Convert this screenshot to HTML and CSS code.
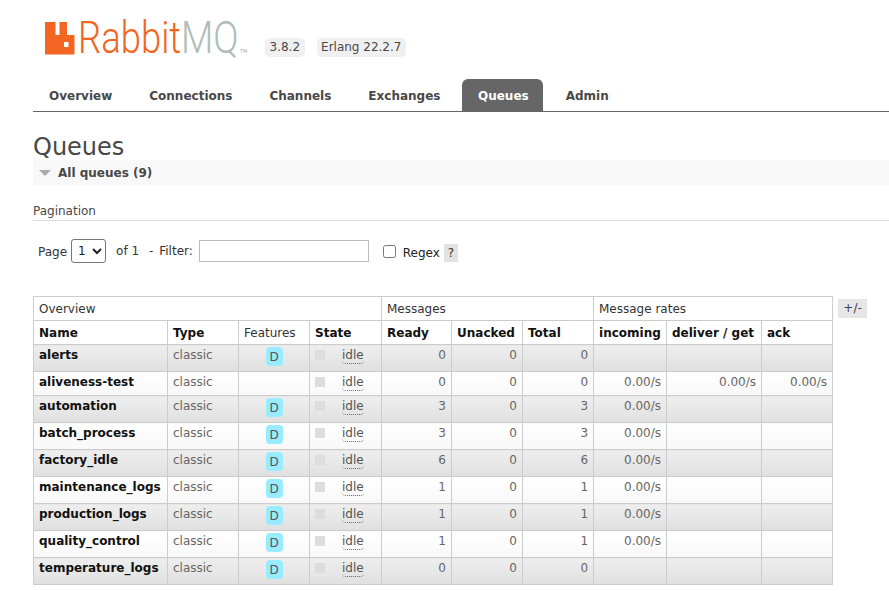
FILE: index.html
```html
<!DOCTYPE html>
<html lang="en">
<head>
<meta charset="utf-8">
<title>RabbitMQ Management</title>
<link rel="stylesheet" href="styles.css">
</head>
<body>
<header class="header">
  <div class="logo">
    <svg class="logo-mark" width="30" height="33" viewBox="0 0 30 33" aria-hidden="true"><path fill="#f26522" fill-rule="evenodd" d="M0 0H10.5V13H14.5V0H22V13H29.5V32.5H0ZM19 20V25H23.5V20Z"/></svg>
    <span class="logo-rabbit">Rabbit</span><span class="logo-mq">MQ</span>
    <span class="logo-tm">TM</span>
  </div>
  <div class="versions"><span class="badge">3.8.2</span><span class="badge">Erlang 22.2.7</span></div>
</header>
<nav class="tabs">
  <a class="tab">Overview</a><a class="tab">Connections</a><a class="tab">Channels</a><a class="tab">Exchanges</a><a class="tab active">Queues</a><a class="tab">Admin</a>
</nav>
<main class="main">
  <h1 class="title">Queues</h1>
  <div class="section-head"><span class="triangle"></span>All queues (9)</div>
  <h3 class="pagination">Pagination</h3>
  <div class="filter">
    <span class="lbl-page">Page</span>
    <select class="page-select"><option>1</option></select>
    <span class="lbl-of">of 1</span>
    <span class="lbl-filter">- Filter:</span>
    <input class="filter-input" type="text">
    <input class="regex-check" type="checkbox">
    <span class="lbl-regex">Regex</span>
    <span class="help">?</span>
  </div>
  <div class="table-wrap">
    <table class="queues">
      <colgroup>
        <col class="c1"><col class="c2"><col class="c3"><col class="c4"><col class="c5"><col class="c6"><col class="c7"><col class="c8"><col class="c9"><col class="c10">
      </colgroup>
      <thead>
        <tr class="group"><th colspan="4">Overview</th><th colspan="3">Messages</th><th colspan="3">Message rates</th></tr>
        <tr class="cols"><th>Name</th><th>Type</th><th class="plain">Features</th><th>State</th><th>Ready</th><th>Unacked</th><th>Total</th><th>incoming</th><th>deliver / get</th><th>ack</th></tr>
      </thead>
      <tbody>
        <tr class="odd"><td class="name">alerts</td><td class="type">classic</td><td class="feat"><span class="d">D</span></td><td class="state"><span class="sq"></span><span class="idle">idle</span></td><td class="num">0</td><td class="num">0</td><td class="num">0</td><td></td><td></td><td></td></tr>
        <tr class="even"><td class="name">aliveness-test</td><td class="type">classic</td><td class="feat"></td><td class="state"><span class="sq"></span><span class="idle">idle</span></td><td class="num">0</td><td class="num">0</td><td class="num">0</td><td class="num">0.00/s</td><td class="num">0.00/s</td><td class="num">0.00/s</td></tr>
        <tr class="odd"><td class="name">automation</td><td class="type">classic</td><td class="feat"><span class="d">D</span></td><td class="state"><span class="sq"></span><span class="idle">idle</span></td><td class="num">3</td><td class="num">0</td><td class="num">3</td><td class="num">0.00/s</td><td></td><td></td></tr>
        <tr class="even"><td class="name">batch_process</td><td class="type">classic</td><td class="feat"><span class="d">D</span></td><td class="state"><span class="sq"></span><span class="idle">idle</span></td><td class="num">3</td><td class="num">0</td><td class="num">3</td><td class="num">0.00/s</td><td></td><td></td></tr>
        <tr class="odd"><td class="name">factory_idle</td><td class="type">classic</td><td class="feat"><span class="d">D</span></td><td class="state"><span class="sq"></span><span class="idle">idle</span></td><td class="num">6</td><td class="num">0</td><td class="num">6</td><td class="num">0.00/s</td><td></td><td></td></tr>
        <tr class="even"><td class="name">maintenance_logs</td><td class="type">classic</td><td class="feat"><span class="d">D</span></td><td class="state"><span class="sq"></span><span class="idle">idle</span></td><td class="num">1</td><td class="num">0</td><td class="num">1</td><td class="num">0.00/s</td><td></td><td></td></tr>
        <tr class="odd"><td class="name">production_logs</td><td class="type">classic</td><td class="feat"><span class="d">D</span></td><td class="state"><span class="sq"></span><span class="idle">idle</span></td><td class="num">1</td><td class="num">0</td><td class="num">1</td><td class="num">0.00/s</td><td></td><td></td></tr>
        <tr class="even"><td class="name">quality_control</td><td class="type">classic</td><td class="feat"><span class="d">D</span></td><td class="state"><span class="sq"></span><span class="idle">idle</span></td><td class="num">1</td><td class="num">0</td><td class="num">1</td><td class="num">0.00/s</td><td></td><td></td></tr>
        <tr class="odd"><td class="name">temperature_logs</td><td class="type">classic</td><td class="feat"><span class="d">D</span></td><td class="state"><span class="sq"></span><span class="idle">idle</span></td><td class="num">0</td><td class="num">0</td><td class="num">0</td><td></td><td></td><td></td></tr>
      </tbody>
    </table>
    <span class="plus-minus">+/-</span>
  </div>
</main>
</body>
</html>
```
FILE: styles.css
```css
* { box-sizing: border-box; }
html, body { margin: 0; padding: 0; }
body {
  font-family: "DejaVu Sans", Verdana, sans-serif;
  font-size: 12px;
  color: #484848;
  background: #fff;
  overflow: hidden;
  height: 591px;
}
.header { display: flex; align-items: flex-start; height: 79px; padding: 22px 0 0 45px; }
.logo { display: flex; align-items: flex-start; width: 220px; }
.logo-mark { display: block; flex: none; }
.logo-rabbit, .logo-mq { display: block; flex: none; font-family: Roboto, sans-serif; font-weight: 300; font-size: 45px; line-height: 32px; white-space: nowrap; transform-origin: left center; }
.logo-rabbit { color: #f26522; width: 103px; margin-left: 3px; transform: scaleX(0.81); }
.logo-mq { color: #b0bdb6; width: 57px; transform: scaleX(0.83); }
.logo-tm { font-size: 5px; line-height: 6px; color: #aaa; margin-top: 26px; margin-left: 2px; }
.versions { display: flex; gap: 12px; padding-top: 16px; }
.badge { background: #f0f0f0; border-radius: 5px; padding: 0 4.5px; height: 19px; line-height: 19px; font-size: 12px; color: #484848; }
.tabs { display: flex; margin-left: 33px; height: 33px; border-bottom: 1px solid #666; }
.tab { font-weight: bold; font-size: 12px; padding: 0 16px; line-height: 35px; margin-right: 5px; color: #484848; }
.tab.active { background: #666; color: #fff; border-radius: 6px 6px 0 0; margin-left: 1px; margin-right: 6.5px; padding: 0 14.5px 0 15.5px; }
.main { padding: 0 0 0 33px; }
.title { font-weight: normal; font-size: 24px; line-height: 30px; margin: 20px 0 0; color: #484848; }
.section-head { background: #f8f8f8; height: 25px; margin-top: -2px; line-height: 24px; font-weight: bold; font-size: 12px; padding-left: 6px; display: flex; align-items: center; }
.triangle { width: 0; height: 0; border-left: 6px solid transparent; border-right: 6px solid transparent; border-top: 6px solid #aaa; margin-right: 7px; }
.pagination { font-weight: normal; font-size: 12px; line-height: 16px; margin: 18px 0 0; padding-bottom: 1px; border-bottom: 1px solid #ddd; height: 18px; color: #484848; }
.filter { display: flex; align-items: center; height: 24px; margin-top: 18px; padding-left: 5px; color: #333; }
.lbl-page { margin-top: 2px; }
.page-select { margin: 0 0 0 4px; width: 35px; height: 24px; font: 12px "DejaVu Sans", sans-serif; padding: 0 0 0 2px; border: 1px solid #767676; border-radius: 3px; background: #fff; color: #222; }
.lbl-of { margin-left: 10px; }
.lbl-filter { margin-left: 10px; word-spacing: 2px; }
.filter-input { margin: 0 0 0 6px; width: 170px; height: 22px; border: 1px solid #bbb; background: #fff; padding: 0; }
.regex-check { margin: 0 0 0 14px; width: 13px; height: 13px; }
.lbl-regex { margin: 4px 0 0 7px; color: #222; }
.help { margin: 3px 0 0 4px; background: #e2e2e2; width: 14px; height: 18px; line-height: 18px; text-align: center; }
.table-wrap { display: flex; align-items: flex-start; margin-top: 33px; }
.queues { border-collapse: collapse; table-layout: fixed; width: 799px; flex: none; font-size: 12px; }
.c1 { width: 134px; } .c2 { width: 71px; } .c3 { width: 71px; } .c4 { width: 72px; } .c5 { width: 70px; }
.c6 { width: 71px; } .c7 { width: 71px; } .c8 { width: 73px; } .c9 { width: 95px; } .c10 { width: 71px; }
.queues th, .queues td { border: 1px solid #ccc; padding: 0 5px; vertical-align: top; }
.group th { font-weight: normal; text-align: left; height: 24px; line-height: 22px; padding-top: 1px; color: #333; }
.cols th { text-align: left; font-weight: bold; height: 24px; line-height: 22px; padding-top: 1px; color: #111; white-space: nowrap; }
.cols th.plain { font-weight: normal; color: #333; }
tbody tr.odd td { background: linear-gradient(#eee, #e0e0e0); }
tbody tr.even td { background: linear-gradient(#fff, #f8f8f8); }
.queues tbody td { height: 24px; line-height: 18px; padding-top: 1px; }
.queues td.name { font-weight: bold; color: #111; white-space: nowrap; padding-right: 0; }
.type { color: #666; }
.feat { text-align: center; }
.d { display: inline-block; width: 17px; height: 19px; line-height: 20px; margin: 1px 0 5px; background: #99ebff; border-radius: 4px; color: #555; font-size: 12px; text-align: center; vertical-align: top; }
.state { white-space: nowrap; }
.sq { display: inline-block; width: 10px; height: 10px; background: #ddd; margin-top: 4px; vertical-align: top; }
.idle { display: inline-block; margin-left: 17px; color: #555; line-height: 15px; border-bottom: 1px dotted #666; border-radius: 0 0 4px 4px; margin-top: 1px; }
.num { text-align: right; color: #666; }
.plus-minus { background: #e6e6e6; margin: 3px 0 0 5px; width: 29px; text-align: center; height: 19px; line-height: 19px; color: #444; }
```
